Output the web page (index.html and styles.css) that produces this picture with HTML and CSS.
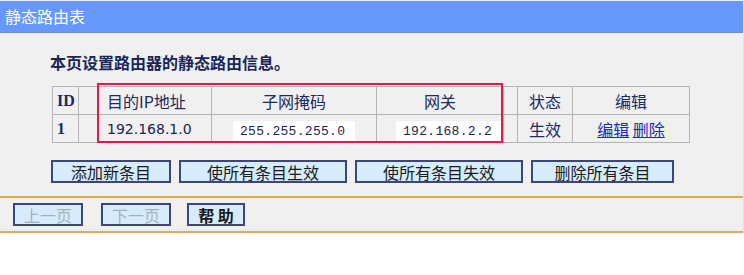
FILE: index.html
```html
<!DOCTYPE html>
<html lang="zh-CN">

<head>
    <meta charset="UTF-8">
    <title>静态路由表</title>
    <link rel="stylesheet" href="styles.css">
</head>

<body>
    <div class="page">
        <div class="title-bar">静态路由表</div>

        <div class="panel">
            <p class="intro">本页设置路由器的静态路由信息。</p>

            <div class="table-wrap">
                <table class="routes">
                    <colgroup>
                        <col style="width: 26px">
                        <col style="width: 19px">
                        <col style="width: 114px">
                        <col style="width: 165px">
                        <col style="width: 127px">
                        <col style="width: 14px">
                        <col style="width: 55px">
                        <col style="width: 117px">
                    </colgroup>
                    <tr class="head">
                        <td class="id">ID</td>
                        <td></td>
                        <td class="left">目的IP地址</td>
                        <td>子网掩码</td>
                        <td>网关</td>
                        <td></td>
                        <td>状态</td>
                        <td>编辑</td>
                    </tr>
                    <tr>
                        <td class="id">1</td>
                        <td></td>
                        <td class="left ip">192.168.1.0</td>
                        <td class="mask"><span class="patch">255.255.255.0</span></td>
                        <td class="gw"><span class="patch">192.168.2.2</span></td>
                        <td></td>
                        <td>生效</td>
                        <td><a href="#" class="link">编辑</a> <a href="#" class="link">删除</a></td>
                    </tr>
                </table>
                <div class="highlight"></div>
            </div>

            <div class="actions">
                <button class="btn w120">添加新条目</button>
                <button class="btn w168">使所有条目生效</button>
                <button class="btn w168">使所有条目失效</button>
                <button class="btn w143">删除所有条目</button>
            </div>
        </div>

        <div class="nav">
            <button class="btn small" disabled>上一页</button>
            <button class="btn small" disabled>下一页</button>
            <button class="btn help">帮 助</button>
        </div>
    </div>
</body>

</html>
```

FILE: styles.css
```css
body {
    margin: 0;
    background-color: #fff;
    font-family: "Noto Sans CJK SC", "DejaVu Sans", sans-serif;
    color: #1c2a5e;
}

.page {
    width: 743px;
    border-right: 1px solid #e4e4e4;
    padding-top: 1px;
    background-color: #ececf0;
}

.title-bar {
    height: 31px;
    line-height: 30px;
    padding-left: 5px;
    background-color: #6698fb;
    border-bottom: 1px solid #6f8ad6;
    box-shadow: 0 1px 0 #dfeefa;
    color: #fff;
    font-size: 16px;
}

.panel {
    background-color: #f0f0f0;
    padding: 18px 0 13px;
    border-bottom: 2px solid #e8a84a;
}

.intro {
    margin: 0 0 13px 50px;
    font-size: 16px;
    line-height: 22px;
    font-weight: bold;
    color: #1a2658;
}

.table-wrap {
    position: relative;
    margin-left: 52px;
    width: 637px;
}

.routes {
    border-collapse: collapse;
    table-layout: fixed;
    width: 637px;
    font-size: 16px;
}

.routes td {
    height: 27px;
    padding: 0;
    border: 1px solid #b4b4b4;
    text-align: center;
    color: #1c2a66;
    white-space: nowrap;
    overflow: hidden;
}

.routes .id {
    font-family: "Liberation Serif", serif;
    font-weight: bold;
    text-align: left;
    padding-left: 4px;
}

.routes .left {
    text-align: left;
    padding-left: 9px;
}

.routes .ip {
    font-family: "DejaVu Sans", sans-serif;
    font-size: 14px;
    color: #1c2450;
}

.routes .mask {
    text-align: left;
    padding-left: 21px;
}

.routes .gw {
    text-align: left;
    padding-left: 19px;
}

.patch {
    display: inline-block;
    background-color: #fff;
    padding: 3px 10px 3px 7px;
    font-family: "Liberation Mono", monospace;
    font-size: 13px;
    letter-spacing: 0.3px;
    color: #1c2450;
}

.link {
    color: #1e2ab8;
    text-decoration: underline;
}

.highlight {
    position: absolute;
    left: 45px;
    top: -3px;
    width: 402px;
    height: 56px;
    border: 2px solid #e21a4a;
}

.actions {
    display: flex;
    gap: 8px;
    margin: 17px 0 0 51px;
}

.btn {
    height: 23px;
    padding: 0;
    background-color: #d6ecfb;
    border: 2px solid #3d4678;
    font-family: "Noto Sans CJK SC", sans-serif;
    font-size: 16px;
    line-height: 18px;
    color: #1a1a1a;
}

.btn:disabled {
    color: #a6b0ba;
}

.w120 {
    width: 120px;
}

.w168 {
    width: 168px;
}

.w143 {
    width: 143px;
}

.nav {
    display: flex;
    gap: 18px;
    padding: 5px 0 5px 13px;
    background-color: #f0f0f0;
    border-bottom: 2px solid #eaa657;
    box-shadow: inset 0 -2px 0 #e2f2fa;
}

.small {
    width: 70px;
}

.help {
    width: 58px;
    margin-left: -2px;
    font-weight: bold;
}
```
